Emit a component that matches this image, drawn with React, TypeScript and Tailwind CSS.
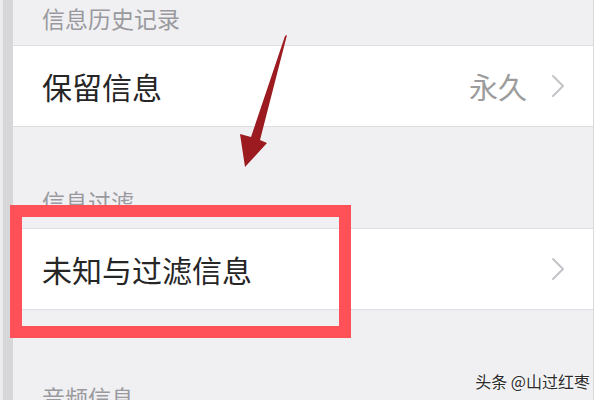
const font = { fontFamily: '"Noto Sans CJK SC", "Noto Sans", sans-serif' }

function Chevron() {
  return (
    <svg width="14" height="24" viewBox="0 0 14 24" className="shrink-0">
      <polyline points="2,2 12,12 2,22" fill="none" stroke="#c4c4c8" strokeWidth="2" strokeLinecap="round" strokeLinejoin="round" />
    </svg>
  )
}

function Header({ text, height }: { text: string; height: string }) {
  return (
    <div className={`${height} shrink-0 flex items-end pb-[15px] pl-[29px] bg-[#f0f0f3] border-b border-[#dedee2]`}>
      <span className="text-[23px] leading-[23px] text-[#9a9a9e]">{text}</span>
    </div>
  )
}

function Row({ label, value }: { label: string; value?: string }) {
  return (
    <div className="h-[81px] shrink-0 flex items-center pl-[29px] pr-[28px] bg-white border-b border-[#dedee2]">
      <span className="flex-1 text-[30px] leading-none text-[#262626]">{label}</span>
      {value && <span className="text-[29px] leading-none text-[#9c9c9c] mr-[24px]">{value}</span>}
      <Chevron />
    </div>
  )
}

export default function App() {
  return (
    <div className="relative w-[600px] h-[400px] overflow-hidden bg-white flex" style={font}>
      <div className="w-[3px] bg-[#ececec]" />
      <div className="w-[10px] bg-[#d7d7d9]" />
      <div className="w-[581px] flex flex-col bg-[#f0f0f3] border-r border-[#d9d9dc]">
        <Header text="信息历史记录" height="h-[46px]" />
        <Row label="保留信息" value="永久" />
        <Header text="信息过滤" height="h-[102px]" />
        <Row label="未知与过滤信息" />
        <Header text="音频信息" height="h-[115px]" />
      </div>
      <div className="flex-1 bg-white" />

      <div className="absolute left-[10px] top-[205px] w-[341px] h-[133px] border-[12px] border-[#ff5157]" />

      <svg className="absolute left-0 top-0" width="600" height="400" viewBox="0 0 600 400">
        <polygon points="287,35 260,140 267,143 245,167 240,134 251,137 285,36" fill="#9c1b20" />
      </svg>

      <div
        className="absolute right-[10px] top-[370px] text-[16px] leading-[22px] text-[#2a2a2a]"
        style={{ textShadow: '0 0 2px #fff, 0 0 2px #fff' }}
      >
        头条 @山过红枣
      </div>
    </div>
  )
}
